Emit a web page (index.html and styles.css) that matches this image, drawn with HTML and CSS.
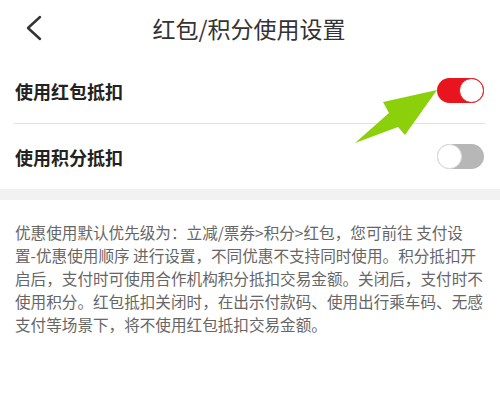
FILE: index.html
```html
<!DOCTYPE html>
<html>
	<head>
		<meta charset="utf-8">
		<title>红包/积分使用设置</title>
		<link rel="stylesheet" href="styles.css">
	</head>
	<body>
		<div class="page">
			<div class="header">
				<svg class="back" width="20" height="28" viewBox="0 0 20 28">
					<polyline points="16,2 4,13 16,24" fill="none" stroke="#333" stroke-width="2.4" stroke-linecap="round" stroke-linejoin="round"/>
				</svg>
				<div class="title">红包/积分使用设置</div>
			</div>

			<div class="list">
				<div class="row">
					<span class="label">使用红包抵扣</span>
					<div class="switch on"><i></i></div>
				</div>
				<div class="line"></div>
				<div class="row">
					<span class="label">使用积分抵扣</span>
					<div class="switch"><i></i></div>
				</div>
			</div>

			<div class="gap"></div>

			<p class="tips">优惠使用默认优先级为：立减/票券&gt;积分&gt;红包，您可前往 支付设<br>置-优惠使用顺序 进行设置，不同优惠不支持同时使用。积分抵扣开<br>启后，支付时可使用合作机构积分抵扣交易金额。关闭后，支付时不<br>使用积分。红包抵扣关闭时，在出示付款码、使用出行乘车码、无感<br>支付等场景下，将不使用红包抵扣交易金额。</p>

			<!-- 指示箭头 -->
			<svg class="arrow" width="90" height="60" viewBox="350 86 90 60">
				<polygon points="437,90 383,102 389,113 355,143 398,127 405,135" fill="#8cd00c"/>
			</svg>
		</div>
	</body>
</html>
```

FILE: styles.css
```css
body{
	margin: 0;
	background: #fff;
	font-family: "Noto Sans CJK SC", "Noto Sans", sans-serif;
}
.page{
	width: 500px;
	height: 409px;
	position: relative;
	overflow: hidden;
}
.header{
	height: 58px;
	display: flex;
	align-items: center;
	padding: 0 24px;
}
.back{margin-top: 0;}
.title{
	flex: 1;
	text-align: center;
	font-size: 23px;
	color: #333;
	margin-right: 22px;
	margin-top: -3px;
}
.list{padding: 0 15px 0 14px;}
.row{
	height: 65px;
	display: flex;
	align-items: center;
	justify-content: space-between;
}
.label{
	font-size: 18px;
	font-weight: bold;
	color: #222;
	padding-left: 1px;
}
.line{height: 1px;background: #e2e2e2;}

.switch{
	width: 47px;
	height: 25px;
	border-radius: 13px;
	background: #b7b7b7;
	position: relative;
	margin-right: 1px;
}
.switch i{
	position: absolute;
	top: 0;
	left: 0;
	width: 23px;
	height: 23px;
	border-radius: 50%;
	background: #fff;
	border: 1px solid #ddd;
}
.switch.on{background: #e8141e;}
.switch.on i{
	left: auto;
	right: 0;
	border-color: #e8141e;
}

.gap{height: 11px;background: #f2f2f2;}

.tips{
	margin: 0;
	padding: 21px 15px 0;
	font-size: 15.6px;
	line-height: 23px;
	color: #666;
	white-space: nowrap;
}

.arrow{
	position: absolute;
	left: 350px;
	top: 86px;
}
```
